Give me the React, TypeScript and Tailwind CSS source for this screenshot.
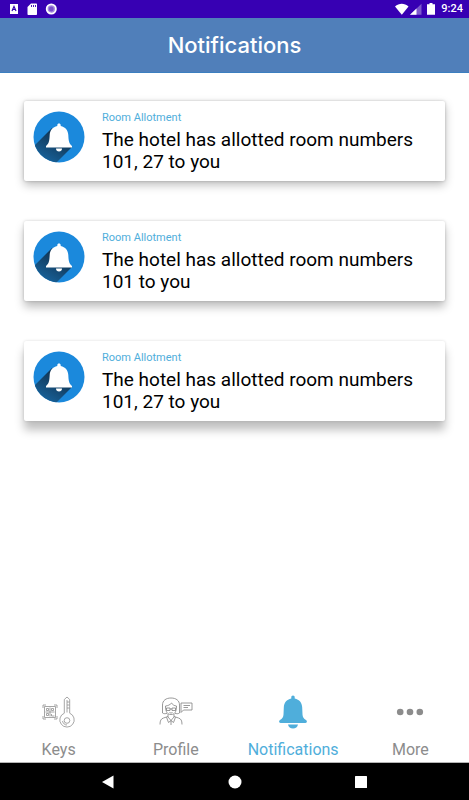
import type { ReactNode } from 'react';

interface Notification {
  id: number;
  category: string;
  message: string;
  shadow: string;
}

const notifications: Notification[] = [
  {
    id: 1,
    category: 'Room Allotment',
    message: 'The hotel has allotted room numbers 101, 27 to you',
    shadow: 'shadow-[0_4px_10px_rgba(0,0,0,0.26),0_0_3px_rgba(0,0,0,0.22)]',
  },
  {
    id: 2,
    category: 'Room Allotment',
    message: 'The hotel has allotted room numbers 101 to you',
    shadow: 'shadow-[0_6px_10px_rgba(0,0,0,0.26),0_0_3px_rgba(0,0,0,0.18)]',
  },
  {
    id: 3,
    category: 'Room Allotment',
    message: 'The hotel has allotted room numbers 101, 27 to you',
    shadow: 'shadow-[0_9px_10px_rgba(0,0,0,0.25),0_0_3px_rgba(0,0,0,0.14)]',
  },
];

function BellBadge() {
  return (
    <svg viewBox="0 0 52 52" className="size-[52px] shrink-0" aria-hidden="true">
      <defs>
        <clipPath id="badge">
          <circle cx="26" cy="26" r="25.5" />
        </clipPath>
        <linearGradient id="fold" x1="0.7" y1="0.3" x2="0.3" y2="0.9">
          <stop offset="0" stopColor="#12395a" />
          <stop offset="1" stopColor="#18659f" />
        </linearGradient>
      </defs>
      <circle cx="26" cy="26" r="25.5" fill="#1b89dc" />
      <path d="M19 17 L-4 40 V54 H21 L39 36 Z" fill="url(#fold)" clipPath="url(#badge)" />
      <path
        d="M26 12.500c1 0 1.700.7 1.700 1.700v.8c4.600 1 7.300 4.300 7.600 9 .3 5.300.5 8.700 3.700 11v1.500H13V35c3.200-2.300 3.400-5.700 3.700-11 .3-4.700 3-8 7.600-9v-.8c0-1 .7-1.700 1.700-1.700z"
        fill="#fff"
      />
      <path d="M23 37.500h6c0 2-1.200 3-3 3s-3-1-3-3z" fill="#fff" />
    </svg>
  );
}

function KeysIcon() {
  return (
    <svg viewBox="0 0 34 32" className="h-8 w-[34px]" fill="none" stroke="#8f8f8f" strokeWidth="0.8" aria-hidden="true">
      <path d="M1 12V9h3M12 9h3v3M1 20v3h3M12 23h3v-3" />
      <path d="M2.500 10.500h11v11h-11z" />
      <path d="M4.500 12.500h2v2h-2zM9.500 12.500h2v2h-2zM4.500 17.500h2v2h-2zM8 11.500v9M3.500 16h9M9.500 18v2h3" />
      <path d="M22.300 17.200V3.500L25 1l2.700 2.500v13.700a7.200 7.200 0 1 1-5.400 0z" />
      <path d="M25 4v12.500M25 6h2.500M25 9h2.500M25 12h2.500" />
      <circle cx="25" cy="24.500" r="2.800" />
      <path d="M20.500 25c.5 2.500 2.300 4 4.500 4" />
    </svg>
  );
}

function ProfileIcon() {
  return (
    <svg viewBox="0 0 34 32" className="h-8 w-[34px]" fill="none" stroke="#808080" strokeWidth="0.8" aria-hidden="true">
      <path d="M3.500 17V9c0-4.500 3.500-7 8.500-7s8.500 2.500 8.500 7v8c-1.500 1-3 .8-4.500.3M3.500 17c1.500 1 3 .8 4.500.3" />
      <path d="M6.500 10c0 6 2 8.500 5.500 8.500s5.500-2.500 5.500-8.500c-2.200-.2-4-1.300-5-3-1.500 1.800-3.500 2.800-6 3z" />
      <path d="M7.500 12H11v2.500H7.500zM13 12h3.500v2.500H13zM11 13h2M10.500 16.500c1 .6 2 .6 3 0" />
      <path d="M9 18v3l3 3.500 3-3.500v-3M9 20.500L4.500 22c-2.500.8-3.500 2.500-3.500 6.500M15 20.500l4.500 1.500c2.500.8 3.500 2.500 3.500 6.500" />
      <path d="M7.500 21.200l2 5.300 2.500-2 2.500 2 2-5.300M12 24.500v4.500" />
      <path d="M22 7h11v7h-8.500L22 16.500zM24.500 9.500h6.500M24.500 11.500h4.500" />
    </svg>
  );
}

function BellIcon() {
  return (
    <svg viewBox="0 0 28 34" className="h-[34px] w-7" fill="#4faedb" aria-hidden="true">
      <path d="M14 .5c1.100 0 1.700.8 1.700 1.800v1.200c4.700.9 7.300 4.400 7.500 9l.3 7c.1 2.500 1.300 4 3.500 5.600.8.600 1 1.200.8 2-.2.600-.7.900-1.500.9H1.700c-.8 0-1.300-.3-1.500-.9-.2-.8 0-1.400.8-2 2.200-1.600 3.400-3.100 3.500-5.600l.3-7c.2-4.600 2.800-8.100 7.500-9V2.300c0-1 .6-1.800 1.700-1.800z" />
      <path d="M9 29.500h10c-.5 2.700-2.300 4-5 4s-4.500-1.300-5-4z" />
    </svg>
  );
}

function MoreIcon() {
  return (
    <svg viewBox="0 0 28 8" className="h-2 w-7" fill="#8c8c8c" aria-hidden="true">
      <circle cx="4.200" cy="4" r="3.300" />
      <circle cx="14" cy="4" r="3.300" />
      <circle cx="23.800" cy="4" r="3.300" />
    </svg>
  );
}

const tabs: { label: string; icon: ReactNode; active?: boolean }[] = [
  { label: 'Keys', icon: <KeysIcon /> },
  { label: 'Profile', icon: <ProfileIcon /> },
  { label: 'Notifications', icon: <BellIcon />, active: true },
  { label: 'More', icon: <MoreIcon /> },
];

function StatusBar() {
  return (
    <div className="flex h-[18px] items-center justify-between bg-[#3700b3] pr-1.5 pl-2.5 text-white">
      <div className="flex items-center gap-2">
        <svg viewBox="0 0 9 10" className="h-2.5 w-[9px]" aria-hidden="true">
          <path d="M0 0h8v10H0z" fill="#fff" />
          <path d="M2 7l2-4.500L6 7M2.700 5.500h2.600" fill="none" stroke="#3700b3" strokeWidth="1.200" />
        </svg>
        <svg viewBox="0 0 10 12" className="h-3 w-2.5" aria-hidden="true">
          <path d="M4 .5h5c.6 0 1 .4 1 1V11c0 .6-.4 1-1 1H1.500c-.6 0-1-.4-1-1V4z" fill="#fff" />
          <path d="M4.500 2v2M6.500 2v2M8.500 2v2" stroke="#3700b3" strokeWidth="0.900" />
        </svg>
        <svg viewBox="0 0 12 12" className="size-3" aria-hidden="true">
          <circle cx="6.300" cy="6" r="4.600" fill="#a68ade" stroke="#fff" strokeWidth="1.800" />
          <circle cx="6.300" cy="6" r="2.400" fill="#7850cb" />
        </svg>
      </div>
      <div className="flex items-center gap-1.5">
        <svg viewBox="0 0 40 12" className="h-3 w-10" fill="#fff" aria-hidden="true">
          <path d="M0 3.500C4-.2 9.500-.2 13.500 3.500L6.800 11.800z" />
          <path d="M26.500.800v11H15z" fillOpacity="0.350" />
          <path d="M21.500 5.600v6.200H15z" />
          <path d="M34.500 0h3v1.200H40v10.600h-8V1.200h2.500z" />
        </svg>
        <span className="text-[11px] leading-4 font-medium">9:24</span>
      </div>
    </div>
  );
}

function App() {
  return (
    <div className="flex min-h-screen flex-col bg-white font-[Roboto,sans-serif]">
      <StatusBar />

      <header className="flex h-[55px] items-center justify-center border-b border-[#3c7fc0] bg-[#507fba]">
        <h1 className="font-[Inter,sans-serif] text-[22px] leading-7 font-medium text-white">Notifications</h1>
      </header>

      <main className="flex flex-1 flex-col gap-10 px-6 pt-7 pb-10">
        {notifications.map((n) => (
          <article
            key={n.id}
            className={`flex min-h-20 items-start rounded-xs bg-white px-[9px] pt-2.5 pb-2 ${n.shadow}`}
          >
            <BellBadge />
            <div className="ml-[17px] flex-1">
              <p className="text-[11px] leading-[14px] text-[#4faedb]">{n.category}</p>
              <h2 className="mt-1 text-[19px] leading-[22px] text-black">{n.message}</h2>
            </div>
          </article>
        ))}
      </main>

      {/* Bottom tabs */}
      <nav className="grid grid-cols-4 border-b border-[#b5b5b5] pb-0.5">
        {tabs.map((tab) => (
          <button
            key={tab.label}
            type="button"
            className={`flex flex-col items-center gap-2 ${tab.active ? 'text-[#4faedb]' : 'text-[#8c8c8c]'}`}
          >
            <span className="flex h-10 items-center">{tab.icon}</span>
            <span className="text-base leading-5">{tab.label}</span>
          </button>
        ))}
      </nav>

      {/* System navigation */}
      <div className="grid h-[37px] grid-cols-[1fr_36px_1fr] items-center bg-black">
        <button type="button" aria-label="Back" className="justify-self-center">
          <svg viewBox="0 0 14 14" className="size-3.5" fill="#fff">
            <path d="M1 7L12.500.5v13z" />
          </svg>
        </button>
        <button type="button" aria-label="Home" className="justify-self-center">
          <svg viewBox="0 0 14 14" className="size-3.5" fill="#fff">
            <circle cx="7" cy="7" r="6.500" />
          </svg>
        </button>
        <button type="button" aria-label="Recent apps" className="justify-self-center">
          <svg viewBox="0 0 14 14" className="size-3.5" fill="#fff">
            <rect x="1" y="1" width="12" height="12" rx="0.500" />
          </svg>
        </button>
      </div>
    </div>
  );
}

export default App;
